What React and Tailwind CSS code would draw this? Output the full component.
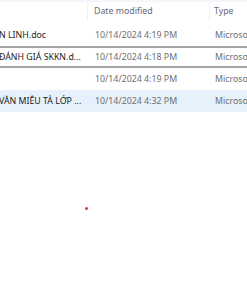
export default function App() {
  const rows = [
    { name: "N LINH.doc", date: "10/14/2024 4:19 PM", type: "Microsoft Word 97", style: "" },
    { name: "ĐÁNH GIÁ SKKN.d...", date: "10/14/2024 4:18 PM", type: "Microsoft Word 97", style: "focus" },
    { name: "", date: "10/14/2024 4:19 PM", type: "Microsoft Word 97", style: "" },
    { name: "VĂN MIÊU TẢ LỚP ...", date: "10/14/2024 4:32 PM", type: "Microsoft Word 97", style: "sel" },
  ];
  return (
    <div className="relative w-[247px] h-[296px] bg-white overflow-hidden text-[8.8px] leading-none" style={{ fontFamily: '"Noto Sans", "Open Sans", sans-serif' }}>
      <div className="h-[2px] bg-[#f3f6fa]" />
      <div className="flex h-[22px] text-[#5f6b7a]">
        <div className="w-[88px] shrink-0 border-r border-[#eef0f3] h-[19px]" />
        <div className="w-[122px] shrink-0 pl-[6px] flex items-center h-[19px] border-r border-[#eef0f3] whitespace-nowrap">Date modified</div>
        <div className="pl-[4px] flex items-center h-[19px] whitespace-nowrap">Type</div>
      </div>
      <div className="flex flex-col">
        {rows.map((r, i) => (
          <div
            key={i}
            className={
              "flex items-center h-[22px] whitespace-nowrap " +
              (r.style === "focus" ? "border-y-2 border-[#a6a6a6] " : "") +
              (r.style === "sel" ? "bg-[#e6f1fb] " : "")
            }
          >
            <div className="w-[88px] shrink-0 overflow-hidden text-[#1b1b1b] leading-[16px]">
              <span className="block ml-[-1px]">{r.name}</span>
            </div>
            <div className="w-[126px] shrink-0 pl-[7px] text-[#6e6e6e]">{r.date}</div>
            <div className="text-[#6e6e6e] pl-[1px]">{r.type}</div>
          </div>
        ))}
      </div>
      <div className="absolute left-[85px] top-[207px] w-[3px] h-[3px] rounded-full bg-[#e8312f]" />
    </div>
  );
}
